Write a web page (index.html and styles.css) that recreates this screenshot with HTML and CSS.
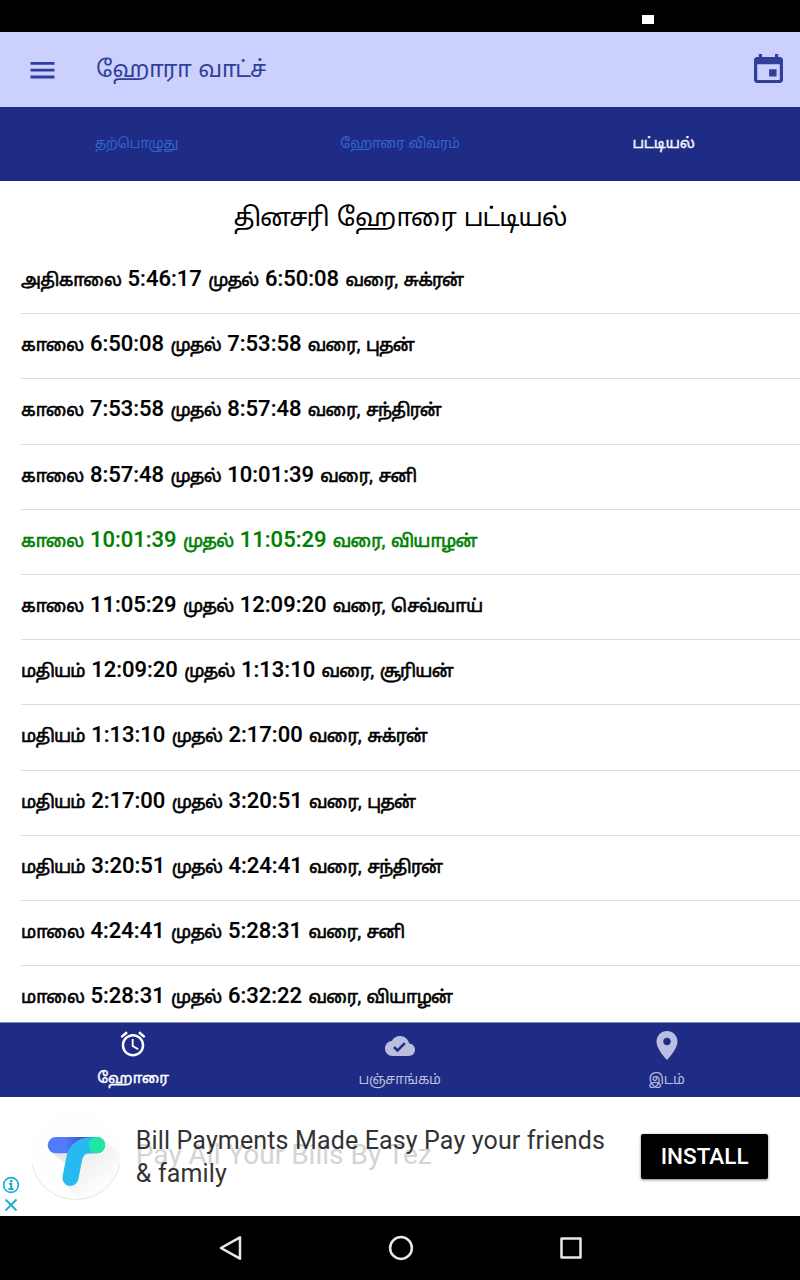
FILE: index.html
```html
<!DOCTYPE html>
<html lang="ta">
<head>
    <meta charset="UTF-8">
    <meta name="viewport" content="width=device-width, initial-scale=1.0">
    <title>ஹோரா வாட்ச்</title>
    <link rel="stylesheet" href="styles.css">
</head>
<body>
    <div class="status-bar"><span class="status-icon"></span></div>

    <header class="toolbar">
        <svg class="menu-icon" viewBox="0 0 24 17"><path d="M0 0h24v2.8H0zM0 6.8h24v2.8H0zM0 13.6h24v2.8H0z"/></svg>
        <h1 class="app-title">ஹோரா வாட்ச்</h1>
        <svg class="calendar-icon" viewBox="3 1 18 20" preserveAspectRatio="none"><path d="M17 11.500h-4.600v5h4.600v-5zM16 1v2H8V1H6v2H5c-1.110 0-1.990.9-1.990 2L3 19c0 1.100.89 2 2 2h14c1.100 0 2-.9 2-2V5c0-1.100-.9-2-2-2h-1V1h-2zm3 18H5V8h14v11z"/></svg>
    </header>

    <nav class="tabs">
        <span class="tab">தற்பொழுது</span>
        <span class="tab">ஹோரை விவரம்</span>
        <span class="tab active">பட்டியல்</span>
    </nav>

    <main class="content">
        <h2 class="list-title">தினசரி ஹோரை பட்டியல்</h2>
        <ul class="hora-list">
            <li>அதிகாலை <time>5:46:17</time> முதல் <time>6:50:08</time> வரை, சுக்ரன்</li>
            <li>காலை <time>6:50:08</time> முதல் <time>7:53:58</time> வரை, புதன்</li>
            <li>காலை <time>7:53:58</time> முதல் <time>8:57:48</time> வரை, சந்திரன்</li>
            <li>காலை <time>8:57:48</time> முதல் <time>10:01:39</time> வரை, சனி</li>
            <li class="current">காலை <time>10:01:39</time> முதல் <time>11:05:29</time> வரை, வியாழன்</li>
            <li>காலை <time>11:05:29</time> முதல் <time>12:09:20</time> வரை, செவ்வாய்</li>
            <li>மதியம் <time>12:09:20</time> முதல் <time>1:13:10</time> வரை, சூரியன்</li>
            <li>மதியம் <time>1:13:10</time> முதல் <time>2:17:00</time> வரை, சுக்ரன்</li>
            <li>மதியம் <time>2:17:00</time> முதல் <time>3:20:51</time> வரை, புதன்</li>
            <li>மதியம் <time>3:20:51</time> முதல் <time>4:24:41</time> வரை, சந்திரன்</li>
            <li>மாலை <time>4:24:41</time> முதல் <time>5:28:31</time> வரை, சனி</li>
            <li>மாலை <time>5:28:31</time> முதல் <time>6:32:22</time> வரை, வியாழன்</li>
        </ul>
    </main>

    <nav class="bottom-nav">
        <div class="nav-item active">
            <svg class="nav-icon" viewBox="0 0 24 24"><path d="M22 5.720l-4.600-3.860-1.290 1.530 4.600 3.860L22 5.720zM7.880 3.390L6.600 1.860 2 5.710l1.290 1.530 4.590-3.850zM12.500 8H11v6l4.750 2.850.75-1.230-4-2.370V8zM12 4c-4.970 0-9 4.030-9 9s4.020 9 9 9c4.970 0 9-4.030 9-9s-4.030-9-9-9zm0 16c-3.870 0-7-3.130-7-7s3.130-7 7-7 7 3.130 7 7-3.130 7-7 7z"/></svg>
            <span class="nav-label">ஹோரை</span>
        </div>
        <div class="nav-item">
            <svg class="nav-icon" viewBox="0 0 24 24"><path d="M19.350 10.040C18.670 6.590 15.640 4 12 4 9.110 4 6.600 5.640 5.350 8.040 2.340 8.360 0 10.910 0 14c0 3.310 2.690 6 6 6h13c2.760 0 5-2.240 5-5 0-2.640-2.050-4.780-4.650-4.960zM10 17l-3.500-3.500 1.410-1.410L10 14.170 15.180 9l1.410 1.410L10 17z"/></svg>
            <span class="nav-label">பஞ்சாங்கம்</span>
        </div>
        <div class="nav-item">
            <svg class="nav-icon" viewBox="2 2 20 20"><path d="M12 2C8.130 2 5 5.130 5 9c0 5.250 7 12.300 7 12.300s7-7.050 7-12.300c0-3.870-3.130-7-7-7zm0 9.500c-1.380 0-2.500-1.120-2.500-2.500s1.120-2.500 2.500-2.500 2.500 1.120 2.500 2.500-1.120 2.500-2.500 2.500z"/></svg>
            <span class="nav-label">இடம்</span>
        </div>
    </nav>

    <section class="ad">
        <div class="ad-choices">
            <svg class="ad-info" viewBox="0 0 18 18"><circle cx="9" cy="9" r="7.400"/><path d="M7 7.800h2.200v5M6.500 13h5M8 5h2.400" stroke-width="2"/></svg>
            <svg class="ad-close" viewBox="0 0 14 14"><path d="M1.500 1.500l11 11M12.500 1.500l-11 11"/></svg>
        </div>
        <svg class="ad-logo" viewBox="0 0 92 92">
            <defs>
                <linearGradient id="shade" x1="0.100" y1="0.100" x2="0.750" y2="0.750">
                    <stop offset="0" stop-color="#e2e2e2"/>
                    <stop offset="1" stop-color="#fdfdfd"/>
                </linearGradient>
                <linearGradient id="bar" x1="0" x2="1">
                    <stop offset="0.300" stop-color="#507cfb"/>
                    <stop offset="0.600" stop-color="#3c56c6"/>
                </linearGradient>
            </defs>
            <circle cx="46" cy="46" r="45" fill="#fefefe"/>
            <path d="M20 40L54 42 73 28 90 43A45 45 0 0 1 52 90L34 73 42 58z" fill="url(#shade)"/>
            <path d="M2 53A45 45 0 0 0 90 53" fill="none" stroke="#dedede" stroke-width="0.800"/>
            <rect x="17.700" y="26" width="57.300" height="16.300" rx="8.150" fill="url(#bar)"/>
            <path d="M67 34.100H61C50 34.100 45 41 44 49L40.500 67" fill="none" stroke="#27baf0" stroke-width="16" stroke-linecap="round"/>
            <circle cx="67" cy="34.100" r="8.200" fill="#1de9a5"/>
        </svg>
        <div class="ad-text">
            <p class="ad-ghost">Pay All Your Bills By Tez</p>
            <p class="ad-headline">Bill Payments Made Easy Pay your friends &amp; family</p>
        </div>
        <button class="install-btn">INSTALL</button>
    </section>

    <footer class="system-nav">
        <svg class="sys-icon" viewBox="0 0 28 28"><path d="M4 14L23 3.300v21.400z"/></svg>
        <svg class="sys-icon" viewBox="0 0 28 28"><circle cx="14" cy="14" r="10.900"/></svg>
        <svg class="sys-icon" viewBox="0 0 28 28"><rect x="4.500" y="4.500" width="19" height="19"/></svg>
    </footer>
</body>
</html>
```

FILE: styles.css
```css
* {
    box-sizing: border-box;
}
body {
    width: 800px;
    height: 1280px;
    margin: 0;
    display: flex;
    flex-direction: column;
    overflow: hidden;
    background-color: #fff;
    font-family: Roboto, 'Noto Sans Tamil', 'Noto Sans', sans-serif;
}
h1, h2, p, ul {
    margin: 0;
    padding: 0;
}
.status-bar {
    flex: 0 0 32px;
    padding: 15px 146px 0 0;
    display: flex;
    justify-content: flex-end;
    background-color: #000;
}
.status-icon {
    width: 12px;
    height: 9px;
    background-color: #fff;
}
.toolbar {
    flex: 0 0 75px;
    padding: 0 17px 0 30px;
    display: flex;
    align-items: center;
    background-color: #ccd0fd;
    color: #303f99;
    fill: #303f99;
}
.menu-icon {
    width: 25px;
    height: 17px;
    margin-top: 1px;
}
.app-title {
    flex: 1;
    margin-left: 41px;
    font-size: 22.800px;
    font-weight: 400;
    line-height: 40px;
    letter-spacing: -1.200px;
    word-spacing: 3px;
    white-space: nowrap;
}
.calendar-icon {
    width: 29px;
    height: 29px;
    margin-bottom: 2px;
}
.tabs {
    flex: 0 0 74px;
    display: grid;
    grid-template-columns: 273px 254px 1fr;
    align-items: center;
    background-color: #1e2c86;
}
.tab {
    text-align: center;
    font-size: 13.700px;
    line-height: 24px;
    margin-bottom: 2px;
    letter-spacing: -0.400px;
    word-spacing: 1px;
    color: #3365ce;
}
.tab.active {
    font-size: 15px;
    letter-spacing: -0.300px;
    color: #f4f4fb;
    -webkit-text-stroke: 0.400px;
}
.content {
    flex: 0 0 841px;
    overflow: hidden;
}
.list-title {
    height: 68px;
    padding-top: 13px;
    text-align: center;
    font-size: 25.500px;
    font-weight: 400;
    line-height: 46px;
    letter-spacing: -1.100px;
    word-spacing: 3px;
    white-space: nowrap;
}
.hora-list {
    list-style: none;
    padding-left: 21px;
}
.hora-list li {
    height: 65.200px;
    border-bottom: 1px solid #dedede;
    font-size: 17.800px;
    line-height: 60px;
    letter-spacing: -0.800px;
    word-spacing: 2.800px;
    white-space: nowrap;
    -webkit-text-stroke: 0.600px;
}
.hora-list time {
    font-size: 22px;
    font-weight: 500;
    letter-spacing: 0;
    -webkit-text-stroke: 0.150px;
}
.hora-list .current {
    color: #008000;
}
.bottom-nav {
    flex: 0 0 75px;
    display: grid;
    grid-template-columns: 266px 267px 1fr;
    background-color: #1e2c86;
    border-top: 1px solid #8b90bd;
    color: #bbbfdf;
    fill: #bbbfdf;
}
.nav-item {
    padding-top: 8px;
    display: flex;
    flex-direction: column;
    align-items: center;
}
.nav-item.active {
    padding-top: 6px;
    color: #fff;
    fill: #fff;
}
.nav-icon {
    width: 30px;
    height: 30px;
}
.nav-label {
    margin-top: 6px;
    font-size: 13.800px;
    line-height: 24px;
    letter-spacing: -0.300px;
}
.nav-item.active .nav-label {
    margin-top: 7px;
    font-size: 15.200px;
    letter-spacing: -0.200px;
    -webkit-text-stroke: 0.400px;
}
.ad {
    flex: 0 0 119px;
    padding-right: 32px;
    display: flex;
    background-color: #fff;
}
.ad-choices {
    width: 30px;
    padding: 79px 0 0 2px;
    display: flex;
    flex-direction: column;
    gap: 4px;
    fill: none;
    stroke: #12b0d4;
}
.ad-info {
    width: 18px;
    height: 18px;
    stroke-width: 1.600;
}
.ad-close {
    width: 14px;
    height: 14px;
    margin-left: 2px;
    stroke-width: 1.800;
}
.ad-logo {
    width: 92px;
    height: 92px;
    margin-top: 14px;
}
.ad-text {
    position: relative;
    width: 476px;
    margin: 27px 30px 0 14px;
}
.ad-headline {
    position: relative;
    font-size: 25px;
    line-height: 33px;
    letter-spacing: 0.140px;
    color: #333;
}
.ad-ghost {
    position: absolute;
    top: 14px;
    left: 0;
    font-size: 28px;
    line-height: 33px;
    color: #d4d4d4;
    white-space: nowrap;
}
.install-btn {
    width: 127px;
    height: 45px;
    margin: 37px 0 0;
    padding: 0 0 2px;
    border: none;
    border-radius: 2px;
    background-color: #000;
    box-shadow: 0 1px 3px rgba(0, 0, 0, 0.5);
    color: #fff;
    font-family: inherit;
    font-size: 22.500px;
    font-weight: 500;
}
.system-nav {
    flex: 0 0 64px;
    padding: 0 215px 0 217px;
    display: flex;
    justify-content: space-between;
    align-items: center;
    background-color: #000;
}
.sys-icon {
    width: 28px;
    height: 28px;
    fill: none;
    stroke: #e8e8e8;
    stroke-width: 2.500;
    stroke-linejoin: round;
}
```
